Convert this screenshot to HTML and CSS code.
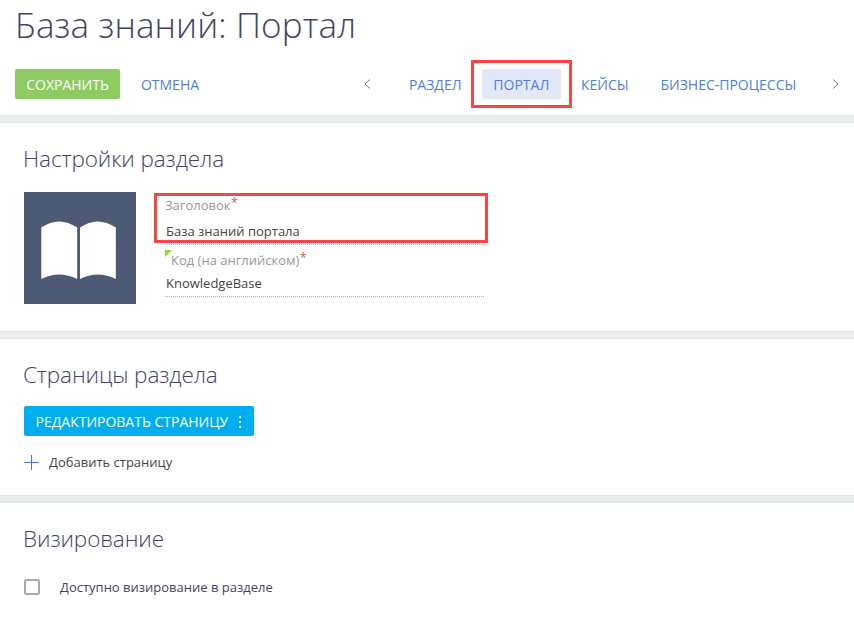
FILE: index.html
```html
<!DOCTYPE html>
<html lang="ru">
<head>
<meta charset="utf-8">
<title>База знаний: Портал</title>
<link rel="stylesheet" href="styles.css">
</head>
<body>
<header class="header">
  <h1 class="title">База знаний: Портал</h1>
  <div class="toolbar">
    <button class="btn btn-save">СОХРАНИТЬ</button>
    <button class="btn btn-cancel">ОТМЕНА</button>
    <nav class="tabs">
      <svg class="chevron chevron-left" width="7" height="10" viewBox="0 0 7 10"><path d="M6 0.5 L1 5 L6 9.5"/></svg>
      <a class="tab">РАЗДЕЛ</a>
      <a class="tab tab-active">ПОРТАЛ<span class="mark mark-tab"></span></a>
      <a class="tab">КЕЙСЫ</a>
      <a class="tab">БИЗНЕС-ПРОЦЕССЫ</a>
      <svg class="chevron chevron-right" width="7" height="10" viewBox="0 0 7 10"><path d="M1 0.5 L6 5 L1 9.5"/></svg>
    </nav>
  </div>
</header>
<div class="divider"></div>
<section class="section section-settings">
  <h2 class="heading heading-settings">Настройки раздела</h2>
  <div class="settings">
    <div class="picture">
      <svg width="112" height="112" viewBox="0 0 112 112"><path fill="#fff" d="M17.3 35.5 Q35 23.5 53.2 35.5 V87 Q35 78 17.3 87 Z M56 35.5 Q73.7 23.5 91.8 35.5 V87 Q73.7 78 56 87 Z"/></svg>
    </div>
    <div class="fields">
      <div class="field field-title">
        <div class="label"><span class="label-text">Заголовок</span><span class="required">*</span></div>
        <div class="value">База знаний портала</div>
        <span class="mark mark-field"></span>
      </div>
      <div class="field field-code">
        <svg class="corner" width="7" height="7" viewBox="0 0 7 7"><path fill="#8edb35" d="M0 0 H7 L0 7 Z"/></svg>
        <div class="label"><span class="label-text">Код (на английском)</span><span class="required">*</span></div>
        <div class="value">KnowledgeBase</div>
      </div>
    </div>
  </div>
</section>
<div class="divider"></div>
<section class="section section-pages">
  <h2 class="heading heading-pages">Страницы раздела</h2>
  <button class="btn btn-edit"><span class="edit-text">РЕДАКТИРОВАТЬ СТРАНИЦУ</span><svg width="2" height="12" viewBox="0 0 2 12"><path fill="#fff" d="M0 0h2v2H0zM0 5h2v2H0zM0 10h2v2H0z"/></svg></button>
  <div class="add">
    <svg width="15" height="15" viewBox="0 0 15 15"><path fill="#4674cf" d="M7 0h1v15H7zM0 7h15v1H0z"/></svg>
    <span class="add-text">Добавить страницу</span>
  </div>
</section>
<div class="divider"></div>
<section class="section section-visa">
  <h2 class="heading heading-visa">Визирование</h2>
  <label class="check"><span class="box"></span><span class="check-text">Доступно визирование в разделе</span></label>
</section>
</body>
</html>
```
FILE: styles.css
```css
* { box-sizing: border-box; }
body { margin: 0; background: #fff; color: #444; font: 13px/18px "Open Sans", sans-serif; overflow: hidden; }
h1, h2 { margin: 0; font-weight: 300; color: #444464; white-space: nowrap; }
svg { display: block; flex: none; }
.header { height: 115px; padding-left: 15px; }
.title { font-size: 35px; letter-spacing: 0.12px; line-height: 50px; height: 69px; }
.toolbar { display: flex; height: 30px; }
.btn { height: 30px; border: 0; border-radius: 2px; font: 14px/30px "Open Sans", sans-serif; color: #fff; padding: 1px 0 0; white-space: nowrap; }
.btn-save { width: 105px; background: #8ecb60; }
.btn-cancel { width: 100px; background: none; color: #4f7fdc; }
.tabs { display: flex; gap: 9px; width: 619px; }
.tab { position: relative; height: 30px; padding: 1px 11.4px 0; border-radius: 2px; font-size: 14px; line-height: 30px; color: #4f7fdc; white-space: nowrap; }
.tab-active { background: #e3e8f8; }
.chevron { fill: none; stroke: #777; stroke-width: 1; margin-top: 10px; }
.chevron-left { margin-left: 144px; margin-right: 17.5px; }
.chevron-right { margin-left: 15px; }
.mark { position: absolute; border: 3px solid #fc4444; }
.mark-tab { left: -11px; top: -9px; width: 101px; height: 48px; }
.mark-field { left: -11px; top: 1px; width: 334px; height: 50px; }
.divider { height: 8px; background: #e9edec; border: solid #e1e4e4; border-width: 1px 0; }
.section { padding: 21px 0 0 24px; }
.section-settings { height: 208px; }
.section-pages { height: 156px; }
.heading { font-size: 22.5px; letter-spacing: -0.11px; line-height: 30px; margin-left: -1px; }
.settings { display: flex; gap: 29px; margin-top: 18px; }
.picture { width: 112px; height: 112px; background: #4d5a75; }
.fields { width: 319px; }
.field { position: relative; border-bottom: 1px dotted #b5b5b5; }
.field-title { height: 53px; padding-top: 4px; }
.field-code { height: 52px; padding-top: 6px; }
.label { color: #999; display: flex; height: 18px; }
.required { color: #f04e3a; font-size: 12px; margin-left: 0.5px; margin-top: -2px; }
.value { margin-left: 1px; }
.field-title .value { margin-top: 8px; }
.field-code .value { margin-top: 5px; }
.field-code .label { padding-left: 6px; }
.corner { position: absolute; left: 0; top: 5px; }
.btn-edit { display: flex; align-items: center; justify-content: space-between; width: 230px; margin-top: 16px; padding: 1px 13px 0 11.5px; background: #00aeef; }
.add { display: flex; align-items: center; gap: 10px; height: 18px; margin-top: 17px; }
.check { display: flex; align-items: center; gap: 20px; height: 18px; margin-top: 24px; color: #444464; }
.box { width: 16px; height: 16px; border: 2px solid #aaa; border-radius: 2px; }
```
